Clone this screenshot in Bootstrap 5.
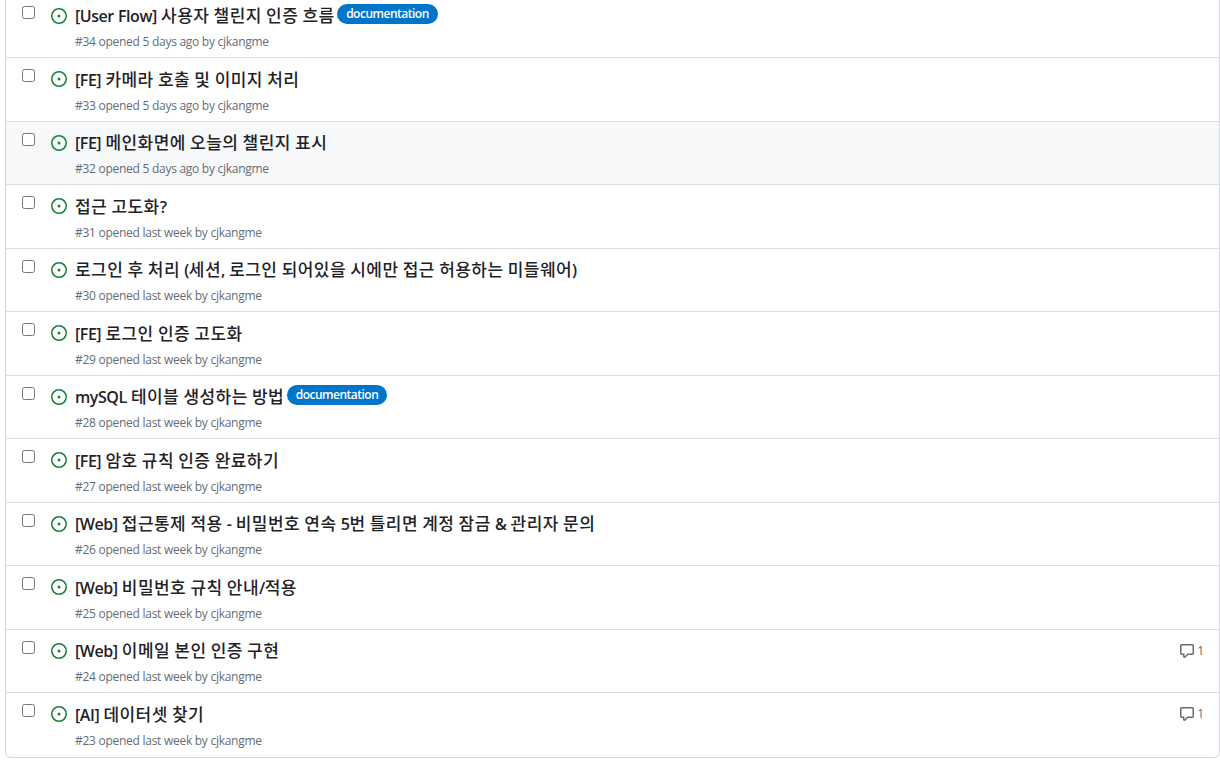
<!DOCTYPE html>
<html lang="ko">
  <head>
    <meta charset="utf-8" />
    <link
      rel="stylesheet"
      href="https://cdn.jsdelivr.net/npm/bootstrap@5.3.2/dist/css/bootstrap.min.css"
    />
    <title>Issues</title>
    <style>
      body {
        font-family: "Open Sans", "Noto Sans CJK KR", sans-serif;
        color: #1f2328;
        background: #fff;
        overflow: hidden;
      }
      .issue-box {
        margin: -5.5px 0 0 5px;
        width: 1215px;
        border: 1px solid #d0d7de;
        border-top: 0;
        border-radius: 0 0 6px 6px;
      }
      .issue-row {
        height: 63.5px;
        padding: 8px 15px 0 16px;
        border-bottom: 1px solid #d8dee4;
      }
      .issue-row:last-child {
        border-bottom: 0;
      }
      .issue-row.is-hover {
        background: #f6f8fa;
      }
      .issue-check {
        width: 13px;
        height: 13px;
        margin: 3px 16px 0 0;
        border: 1px solid #767676;
        border-radius: 2.5px;
        background: #fff;
        flex: none;
      }
      .issue-icon {
        margin: 5px 8px 0 0;
        flex: none;
      }
      .issue-title {
        font-size: 16px;
        font-weight: 600;
        line-height: 24px;
        letter-spacing: -0.45px;
        word-spacing: 0.5px;
        margin-top: 1.5px;
        height: 24px;
      }
      .issue-ko {
        font-size: 17px;
        font-weight: 500;
        letter-spacing: 0.45px;
      }
      .issue-label {
        display: inline-block;
        font-size: 12px;
        font-weight: 600;
        line-height: 18px;
        letter-spacing: -0.5px;
        padding: 0 8px;
        margin-left: 2.5px;
        border-radius: 10px;
        border: 1px solid transparent;
        background: #0075ca;
        color: #fff;
        vertical-align: 4px;
      }
      .issue-meta {
        font-size: 12px;
        line-height: 18px;
        letter-spacing: -0.27px;
        color: #656d76;
        margin-top: 5px;
      }
      .issue-comments {
        font-size: 12px;
        line-height: 18px;
        color: #656d76;
        margin-top: 4px;
        gap: 2px;
      }
    </style>
  </head>
  <body>
    <div class="issue-box" id="issues"></div>

    <script>
      const issues = [
        [34, "[User Flow] 사용자 챌린지 인증 흐름", "5 days ago", true, 0],
        [33, "[FE] 카메라 호출 및 이미지 처리", "5 days ago", false, 0],
        [32, "[FE] 메인화면에 오늘의 챌린지 표시", "5 days ago", false, 0],
        [31, "접근 고도화?", "last week", false, 0],
        [30, "로그인 후 처리 (세션, 로그인 되어있을 시에만 접근 허용하는 미들웨어)", "last week", false, 0],
        [29, "[FE] 로그인 인증 고도화", "last week", false, 0],
        [28, "mySQL 테이블 생성하는 방법", "last week", true, 0],
        [27, "[FE] 암호 규칙 인증 완료하기", "last week", false, 0],
        [26, "[Web] 접근통제 적용 - 비밀번호 연속 5번 틀리면 계정 잠금 & 관리자 문의", "last week", false, 0],
        [25, "[Web] 비밀번호 규칙 안내/적용", "last week", false, 0],
        [24, "[Web] 이메일 본인 인증 구현", "last week", false, 1],
        [23, "[AI] 데이터셋 찾기", "last week", false, 1],
      ];

      const openIcon =
        '<svg class="issue-icon" width="16" height="16" viewBox="0 0 16 16" fill="#1a7f37"><path d="M8 9.5a1.5 1.5 0 1 0 0-3 1.5 1.5 0 0 0 0 3Z"/><path d="M8 0a8 8 0 1 1 0 16A8 8 0 0 1 8 0ZM1.5 8a6.5 6.5 0 1 0 13 0 6.5 6.5 0 0 0-13 0Z"/></svg>';
      const commentIcon =
        '<svg width="16" height="16" viewBox="0 0 16 16" fill="#656d76"><path d="M1 2.75C1 1.784 1.784 1 2.75 1h10.5c.966 0 1.75.784 1.75 1.75v7.5A1.75 1.75 0 0 1 13.25 12H9.06l-2.573 2.573A1.458 1.458 0 0 1 4 13.543V12H2.75A1.75 1.75 0 0 1 1 10.25Zm1.75-.25a.25.25 0 0 0-.25.25v7.5c0 .138.112.25.25.25h2a.75.75 0 0 1 .75.75v2.19l2.72-2.72a.749.749 0 0 1 .53-.22h4.5a.25.25 0 0 0 .25-.25v-7.5a.25.25 0 0 0-.25-.25Z"/></svg>';

      // 한글 구간만 글자 크기를 따로 준다
      const titleHtml = (title) =>
        title
          .replace("&", "&amp;")
          .replace(/[가-힣]+/g, (s) => `<span class="issue-ko">${s}</span>`);

      document.getElementById("issues").innerHTML = issues
        .map(([num, title, ago, doc, comments]) => {
          const label = doc ? '<span class="issue-label">documentation</span>' : "";
          const right = comments
            ? `<div class="issue-comments d-flex align-items-center align-self-start ms-auto">${commentIcon}<span>${comments}</span></div>`
            : "";
          return `<div class="issue-row d-flex${num === 32 ? " is-hover" : ""}">
            <div class="issue-check"></div>
            ${openIcon}
            <div>
              <div class="issue-title">${titleHtml(title)}${label}</div>
              <div class="issue-meta">#${num} opened ${ago} by cjkangme</div>
            </div>
            ${right}
          </div>`;
        })
        .join("");
    </script>
    <script src="https://cdn.jsdelivr.net/npm/bootstrap@5.3.2/dist/js/bootstrap.bundle.min.js"></script>
  </body>
</html>
